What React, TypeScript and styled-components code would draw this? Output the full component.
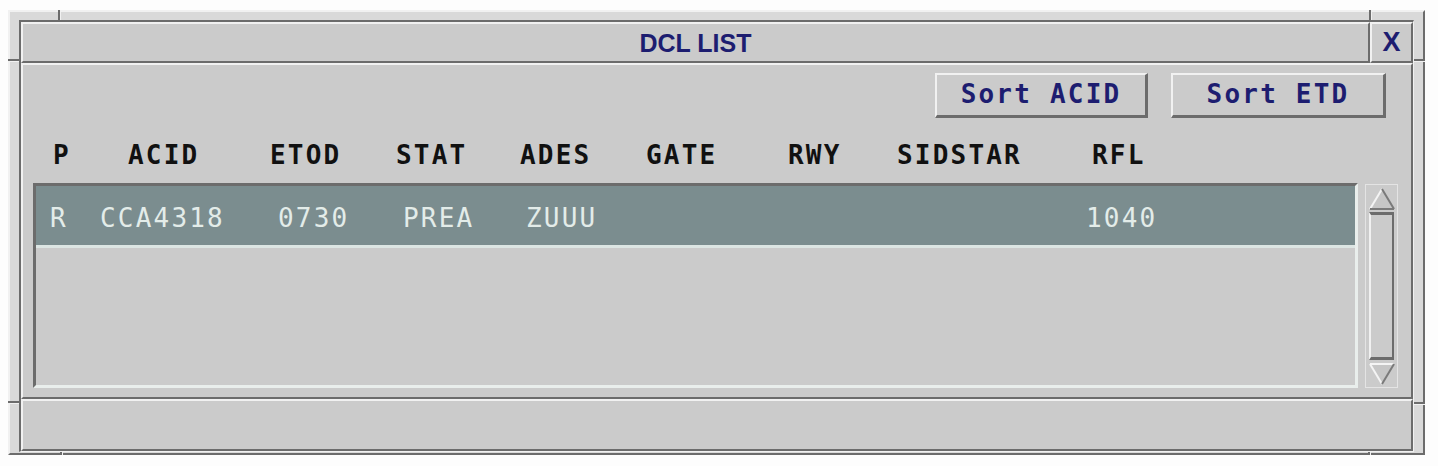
import React from 'react';
import styled, { createGlobalStyle } from 'styled-components';

const C = {
  frame: '#d9d9d9',
  face: '#cbcbcb',
  light: '#f1f1f1',
  dark: '#6c6c6c',
  navy: '#1d1d70',
  row: '#7b8d8f',
  rowText: '#e3ece9',
};

const GlobalStyle = createGlobalStyle`
  html, body { margin: 0; padding: 0; background: #fdfdfd; }
  body { font-family: "DejaVu Sans Mono", "Liberation Mono", monospace; }
`;

const Window = styled.div`
  position: relative;
  box-sizing: border-box;
  margin: 10px 0 0 8px;
  width: 1417px;
  height: 445px;
  padding: 8px 9px 1px 9px;
  background: ${C.frame};
  border-top: 2px solid ${C.light};
  border-left: 2px solid ${C.light};
  border-right: 2px solid ${C.dark};
  border-bottom: 2px solid ${C.dark};
`;

const Inner = styled.div`
  box-sizing: border-box;
  height: 100%;
  display: flex;
  flex-direction: column;
  border-top: 2px solid ${C.dark};
  border-left: 2px solid ${C.dark};
  border-right: 1px solid ${C.light};
  border-bottom: 1px solid ${C.light};
`;

const Raised = styled.div`
  box-sizing: border-box;
  background: ${C.face};
  border-top: 2px solid ${C.light};
  border-left: 2px solid ${C.light};
  border-right: 2px solid ${C.dark};
  border-bottom: 2px solid ${C.dark};
`;

const TitleRow = styled.div`
  display: flex;
  height: 41px;
`;

const TitleBar = styled(Raised)`
  flex: 1;
  display: flex;
  align-items: center;
  justify-content: center;
  padding-top: 2px;
  font-family: "Liberation Sans", Arial, sans-serif;
  font-weight: bold;
  font-size: 25px;
  color: ${C.navy};
`;

const CloseBox = styled(Raised)`
  width: 43px;
  display: flex;
  align-items: center;
  justify-content: center;
  font-family: "Liberation Sans", Arial, sans-serif;
  font-weight: bold;
  font-size: 27px;
  color: ${C.navy};
`;

const Body = styled(Raised)`
  height: 336px;
  display: flex;
  flex-direction: column;
  padding: 8px 13px 9px 10px;
`;

const ButtonRow = styled.div`
  display: flex;
  justify-content: flex-end;
  gap: 23px;
  padding-right: 12px;
  height: 45px;
`;

const Button = styled.button<{ $w: number }>`
  box-sizing: border-box;
  width: ${(p) => p.$w}px;
  height: 45px;
  margin: 0;
  padding: 0 0 2px 0;
  background: ${C.face};
  border-top: 2px solid ${C.light};
  border-left: 2px solid ${C.light};
  border-right: 3px solid ${C.dark};
  border-bottom: 3px solid ${C.dark};
  font-family: "DejaVu Sans Mono", monospace;
  font-weight: bold;
  font-size: 26px;
  letter-spacing: 2.2px;
  color: ${C.navy};
  display: flex;
  align-items: center;
  justify-content: center;
`;

const HeaderRow = styled.div`
  display: flex;
  margin-top: 24px;
  height: 26px;
  line-height: 26px;
  padding-left: 20px;
  font-size: 26px;
  font-weight: bold;
  letter-spacing: 2.2px;
  color: #111;
  white-space: nowrap;
`;

const Cell = styled.span<{ $w?: number }>`
  flex: none;
  width: ${(p) => (p.$w ? `${p.$w}px` : 'auto')};
`;

const ListArea = styled.div`
  display: flex;
  margin-top: 15px;
  height: 205px;
`;

const List = styled.div`
  box-sizing: border-box;
  width: 1325px;
  height: 205px;
  background: ${C.face};
  border-top: 3px solid ${C.dark};
  border-left: 3px solid ${C.dark};
  border-right: 3px solid #e9eeec;
  border-bottom: 3px solid #e9eeec;
`;

const Row = styled.div<{ $selected?: boolean }>`
  display: flex;
  align-items: center;
  height: 62px;
  padding-left: 14px;
  padding-top: 4px;
  box-sizing: border-box;
  background: ${(p) => (p.$selected ? C.row : 'transparent')};
  border-bottom: 3px solid ${(p) => (p.$selected ? '#dce5e3' : 'transparent')};
  font-size: 26px;
  letter-spacing: 2.2px;
  color: ${C.rowText};
  white-space: nowrap;
`;

const Scrollbar = styled.div`
  box-sizing: border-box;
  margin-left: 7px;
  margin-top: 1px;
  width: 33px;
  height: 204px;
  display: flex;
  flex-direction: column;
  background: ${C.face};
  border: 1px solid #e4e4e4;
  padding: 1px 2px;
`;

const Arrow = styled.div`
  height: 26px;
  display: flex;
  align-items: center;
  justify-content: center;
`;

const Thumb = styled.div`
  flex: 1;
  box-sizing: border-box;
  border-top: 3px solid ${C.dark};
  border-bottom: 3px solid ${C.dark};
  border-left: 2px solid ${C.light};
  border-right: 2px solid ${C.dark};
  margin: 0 1px;
`;

const StatusBar = styled(Raised)`
  flex: 1;
`;

const Tick = styled.div<{ $side: 'top' | 'bottom' | 'left' | 'right'; $at: number }>`
  position: absolute;
  ${(p) =>
    p.$side === 'top' || p.$side === 'bottom'
      ? `left: ${p.$at}px; width: 3px; height: ${p.$side === 'top' ? 10 : 3}px; ${p.$side}: -2px;
         background: linear-gradient(to right, ${C.dark} 0 2px, ${C.light} 2px 3px);`
      : `top: ${p.$at}px; height: 3px; width: 11px; ${p.$side}: -2px;
         background: linear-gradient(to bottom, ${C.dark} 0 2px, ${C.light} 2px 3px);`}
`;

const UpArrow = () => (
  <svg width="26" height="23" viewBox="0 0 26 23">
    <polygon points="13,1 25,21 1,21" fill="#c6c6c6" />
    <line x1="13" y1="1" x2="1" y2="21" stroke="#f4f4f4" strokeWidth="2" />
    <line x1="13" y1="1" x2="25" y2="21" stroke="#7a7a7a" strokeWidth="2" />
    <line x1="1" y1="21" x2="25" y2="21" stroke="#7a7a7a" strokeWidth="2" />
  </svg>
);

const DownArrow = () => (
  <svg width="26" height="23" viewBox="0 0 26 23">
    <polygon points="1,2 25,2 13,22" fill="#c6c6c6" />
    <line x1="1" y1="2" x2="25" y2="2" stroke="#f4f4f4" strokeWidth="2" />
    <line x1="1" y1="2" x2="13" y2="22" stroke="#f4f4f4" strokeWidth="2" />
    <line x1="25" y1="2" x2="13" y2="22" stroke="#7a7a7a" strokeWidth="2" />
  </svg>
);

const headers: [string, number][] = [
  ['P', 75],
  ['ACID', 142],
  ['ETOD', 126],
  ['STAT', 124],
  ['ADES', 126],
  ['GATE', 142],
  ['RWY', 109],
  ['SIDSTAR', 195],
  ['RFL', 0],
];

const rowCells: [string, number][] = [
  ['R', 50],
  ['CCA4318', 178],
  ['0730', 125],
  ['PREA', 123],
  ['ZUUU', 560],
  ['1040', 0],
];

export default function App() {
  return (
    <>
      <GlobalStyle />
      <Window>
        <Tick $side="top" $at={48} />
        <Tick $side="top" $at={1359} />
        <Tick $side="bottom" $at={50} />
        <Tick $side="bottom" $at={1358} />
        <Tick $side="left" $at={47} />
        <Tick $side="left" $at={389} />
        <Tick $side="right" $at={47} />
        <Tick $side="right" $at={390} />
        <Inner>
          <TitleRow>
            <TitleBar>DCL LIST</TitleBar>
            <CloseBox>X</CloseBox>
          </TitleRow>
          <Body>
            <ButtonRow>
              <Button $w={213}>Sort ACID</Button>
              <Button $w={215}>Sort ETD</Button>
            </ButtonRow>
            <HeaderRow>
              {headers.map(([h, w]) => (
                <Cell key={h} $w={w || undefined}>
                  {h}
                </Cell>
              ))}
            </HeaderRow>
            <ListArea>
              <List>
                <Row $selected>
                  {rowCells.map(([t, w]) => (
                    <Cell key={t} $w={w || undefined}>
                      {t}
                    </Cell>
                  ))}
                </Row>
              </List>
              <Scrollbar>
                <Arrow>
                  <UpArrow />
                </Arrow>
                <Thumb />
                <Arrow>
                  <DownArrow />
                </Arrow>
              </Scrollbar>
            </ListArea>
          </Body>
          <StatusBar />
        </Inner>
      </Window>
    </>
  );
}
